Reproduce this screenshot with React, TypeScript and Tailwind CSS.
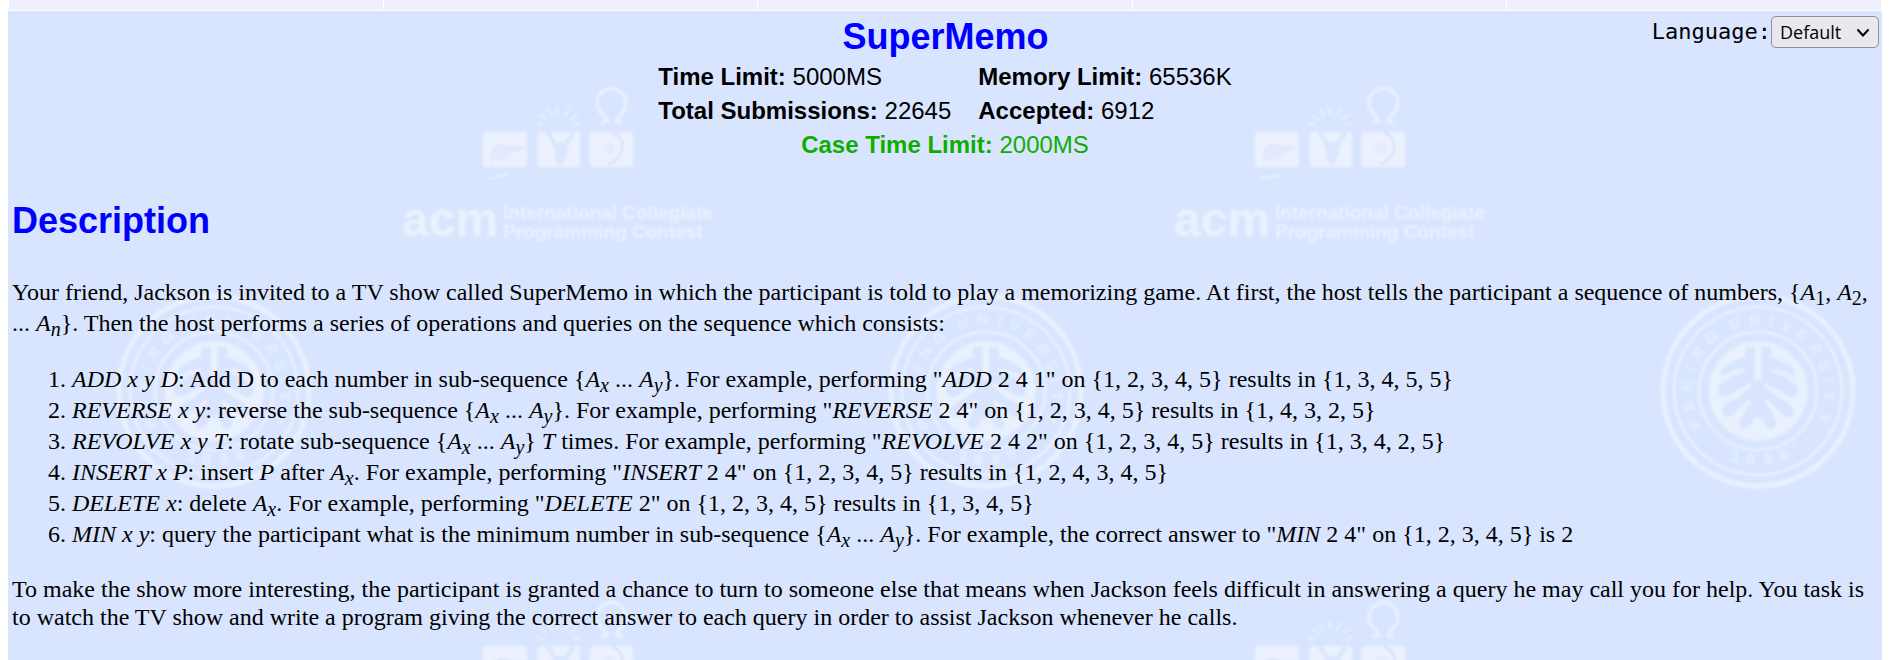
import type { ReactNode } from "react";

const SEAL_LETTERS: [string, number][] = [
  ["P", -118], ["E", -102], ["K", -86], ["I", -72], ["N", -58], ["G", -41],
  ["U", -19], ["N", -3], ["I", 11], ["V", 24], ["E", 38], ["R", 54],
  ["S", 69], ["I", 81], ["T", 94], ["Y", 112],
];

const SEAL_YEAR: [string, number][] = [["1", 19], ["8", 6], ["9", -8], ["8", -22]];

function Seal() {
  return (
    <g transform="translate(214 391)" className="fill-none stroke-[#e9f0fe]">
      <circle r="95" strokeWidth="5" />
      <circle r="84" strokeWidth="2.5" />
      <circle r="59" strokeWidth="2.5" />
      <circle r="49.5" stroke="none" className="fill-[#e9f0fe]" />
      <g className="stroke-[#d9e5ff]" strokeLinecap="round">
        <rect x="-13" y="-44" width="26" height="30" stroke="none" className="fill-[#d9e5ff]" />
        <path d="M-8 -30 Q-20 -27 -31 -19 M8 -30 Q20 -27 31 -19" strokeWidth="11" />
        <path d="M-4 -14 Q-20 -12 -33 -1 M4 -14 Q20 -12 33 -1" strokeWidth="14" />
        <path d="M-4 -1 Q-18 8 -30 20 M4 -1 Q18 8 30 20" strokeWidth="12" />
        <path d="M-3 14 L-13 32 M3 14 L13 32" strokeWidth="11" />
        <path d="M0 -16 V18" strokeWidth="18" />
      </g>
      <g strokeWidth="3.5" strokeLinecap="round">
        <path d="M0 -44 V-11" strokeWidth="6.5" strokeLinecap="butt" />
        <path d="M-39 -11 Q-28 -18 -18 -20 M39 -11 Q28 -18 18 -20" />
        <path d="M-38 12 Q-22 8 -8 -6 M38 12 Q22 8 8 -6" strokeWidth="4" />
        <path d="M-26 31 Q-20 20 -9 11 M26 31 Q20 20 9 11" strokeWidth="4" />
        <path d="M-6 42 L0 31 L6 42 Z" className="fill-[#e9f0fe]" />
      </g>
      <g stroke="none" className="fill-[#e5f0ff] font-['Liberation_Sans'] text-[15px] font-bold" textAnchor="middle">
        {SEAL_LETTERS.map(([ch, deg], i) => (
          <text key={i} y="-66" transform={`rotate(${deg})`}>{ch}</text>
        ))}
        {SEAL_YEAR.map(([ch, deg], i) => (
          <text key={i} y="74" transform={`rotate(${deg})`}>{ch}</text>
        ))}
        <circle cx="-32" cy="55" r="1.5" />
        <circle cx="37" cy="53" r="1.5" />
      </g>
    </g>
  );
}

function ContestLogo() {
  return (
    <g className="fill-[#ebf1fe] font-['Liberation_Sans'] font-bold">
      <rect x="483" y="132" width="44" height="35" rx="4" />
      <path d="M495 160 Q492 154 496 149 Q500 143 506 147 Q514 149 525 147 Q518 152 513 153 Q509 158 500 161 Z" className="fill-[#e2eafd]" />
      <path d="M493 163 Q490 154 495 148 Q499 143 505 146 Q514 148 526 147" className="fill-none stroke-[#d3dff8]" strokeWidth="1.2" />
      <rect x="538" y="132" width="42" height="35" rx="3" />
      <path d="M544 131 L551 141 L554 150 L555 158 L558 165 H562 L566 156 L568 146 L575 134 L572 131 L564 142 H556 L550 131 Z" className="fill-[#dbe6fe]" />
      <path d="M555 142 H565 L564 154 L560 162 L556 154 Z" className="fill-[#dbe6fe]" />
      <rect x="590" y="132" width="43" height="35" rx="4" />
      <circle cx="609" cy="148" r="6" className="fill-[#e4ebfc]" />
      <path d="M612 132 C628 140 625 156 608 165" className="fill-none stroke-[#d5e0f8]" strokeWidth="2" />
      <g className="fill-none stroke-[#e7f1ff]" strokeLinecap="round">
        <path d="M602 123 L607 121 Q605 117 601 113 A14.500 14.500 0 1 1 622 113 Q618 117 616 121 L621 123" strokeWidth="3.5" />
        <path d="M537 123 L542 125 M540 115 L546 119 M548 109 L552 116 M557 108 L558 114 M569 109 L565 116 M577 115 L571 119 M580 123 L574 125" strokeWidth="2" />
        <path d="M489 179 L497 177 L507 175" strokeWidth="2" />
      </g>
      <text x="402" y="236" className="text-[48px]">acm</text>
      <text x="503" y="219" className="text-[19px]">International Collegiate</text>
      <text x="503" y="238" className="text-[19px]">Programming Contest</text>
    </g>
  );
}

function Watermark() {
  return (
    <svg className="pointer-events-none absolute inset-0 size-full" aria-hidden="true">
      <defs>
        <filter id="soften" x="-5%" y="-5%" width="110%" height="110%">
          <feGaussianBlur stdDeviation="0.8" />
        </filter>
        <pattern id="watermark" x="-8" y="-11" width="772" height="514" patternUnits="userSpaceOnUse">
          <g filter="url(#soften)">
            <Seal />
            <ContestLogo />
          </g>
        </pattern>
      </defs>
      <rect width="100%" height="100%" fill="url(#watermark)" />
    </svg>
  );
}

function Sub({ children }: { children: ReactNode }) {
  return <sub className="static align-[-5px] text-[20px] leading-[16px]">{children}</sub>;
}

function A({ i }: { i: string }) {
  return <i>A<Sub>{i}</Sub></i>;
}

function Range() {
  return <>{"{"}<A i="x" /> ... <A i="y" />{"}"}</>;
}

export default function App() {
  return (
    <div className="flex min-h-screen flex-col bg-white px-2 text-black">
      <div className="mx-px mb-px grid h-[10px] grid-cols-5 gap-px">
        {[0, 1, 2, 3, 4].map((n) => (
          <div key={n} className="bg-[#f0f0fd]" />
        ))}
      </div>
      <main className="relative flex-1 bg-[#d9e5ff]">
        <Watermark />
        <div className="relative px-1 pt-1 pb-6">
          <header className="font-['Liberation_Sans',sans-serif]">
            <div className="-mr-px grid h-[45px] grid-cols-[1fr_auto_1fr] items-start">
              <span />
              <h1 className="text-[36px] leading-[44px] font-bold text-[#0000ff]">SuperMemo</h1>
              <div className="flex items-center justify-end">
                <label htmlFor="language" className="pt-px font-['DejaVu_Sans_Mono',monospace] text-[22px] leading-[32px]">Language:</label>
                <div className="relative">
                  <select id="language" className="h-8 w-[108px] appearance-none rounded-[5px] border border-[#8f8f9d] bg-[#e9e9ed] pt-px pl-2 font-['Open_Sans',sans-serif] text-[18px] leading-[28px]">
                    <option>Default</option>
                  </select>
                  <svg className="pointer-events-none absolute top-[12px] right-[9px] h-[10px] w-[14px] fill-none stroke-black stroke-2" viewBox="0 0 14 10" aria-hidden="true">
                    <path d="M1.5 1.500 L7 7.500 L12.500 1.500" />
                  </svg>
                </div>
              </div>
            </div>
            <table className="mx-auto text-[24px] leading-[34px]">
              <tbody>
                <tr>
                  <td className="pr-[27px]"><b>Time Limit:</b> 5000MS</td>
                  <td><b>Memory Limit:</b> 65536K</td>
                </tr>
                <tr>
                  <td className="pr-[27px]"><b>Total Submissions:</b> 22645</td>
                  <td><b>Accepted:</b> 6912</td>
                </tr>
                <tr>
                  <td colSpan={2} className="text-center text-[#0fad00]"><b>Case Time Limit:</b> 2000MS</td>
                </tr>
              </tbody>
            </table>
          </header>
          <h2 className="mt-[38px] font-['Liberation_Sans',sans-serif] text-[36px] leading-[41px] font-bold text-[#0000ff]">Description</h2>
          <section className="mt-9 flex flex-col gap-[25px] font-['Liberation_Serif',serif] text-[24px] leading-[31px]">
            <p>
              Your friend, Jackson is invited to a TV show called SuperMemo in which the participant is told to play a memorizing game. At first, the host tells the participant a sequence of numbers, {"{"}<i>A</i><Sub>1</Sub>, <i>A</i><Sub>2</Sub>, ... <A i="n" />{"}"}. Then the host performs a series of operations and queries on the sequence which consists:
            </p>
            <ol className="list-decimal pl-[60px]">
              <li><i>ADD x y D</i>: Add D to each number in sub-sequence <Range />. For example, performing "<i>ADD</i> 2 4 1" on {"{1, 2, 3, 4, 5}"} results in {"{1, 3, 4, 5, 5}"}</li>
              <li><i>REVERSE x y</i>: reverse the sub-sequence <Range />. For example, performing "<i>REVERSE</i> 2 4" on {"{1, 2, 3, 4, 5}"} results in {"{1, 4, 3, 2, 5}"}</li>
              <li><i>REVOLVE x y T</i>: rotate sub-sequence <Range /> <i>T</i> times. For example, performing "<i>REVOLVE</i> 2 4 2" on {"{1, 2, 3, 4, 5}"} results in {"{1, 3, 4, 2, 5}"}</li>
              <li><i>INSERT x P</i>: insert <i>P</i> after <A i="x" />. For example, performing "<i>INSERT</i> 2 4" on {"{1, 2, 3, 4, 5}"} results in {"{1, 2, 4, 3, 4, 5}"}</li>
              <li><i>DELETE x</i>: delete <A i="x" />. For example, performing "<i>DELETE</i> 2" on {"{1, 2, 3, 4, 5}"} results in {"{1, 3, 4, 5}"}</li>
              <li><i>MIN x y</i>: query the participant what is the minimum number in sub-sequence <Range />. For example, the correct answer to "<i>MIN</i> 2 4" on {"{1, 2, 3, 4, 5}"} is 2</li>
            </ol>
            <p className="leading-[28px]">
              To make the show more interesting, the participant is granted a chance to turn to someone else that means when Jackson feels difficult in answering a query he may call you for help. You task is to watch the TV show and write a program giving the correct answer to each query in order to assist Jackson whenever he calls.
            </p>
          </section>
        </div>
      </main>
    </div>
  );
}
